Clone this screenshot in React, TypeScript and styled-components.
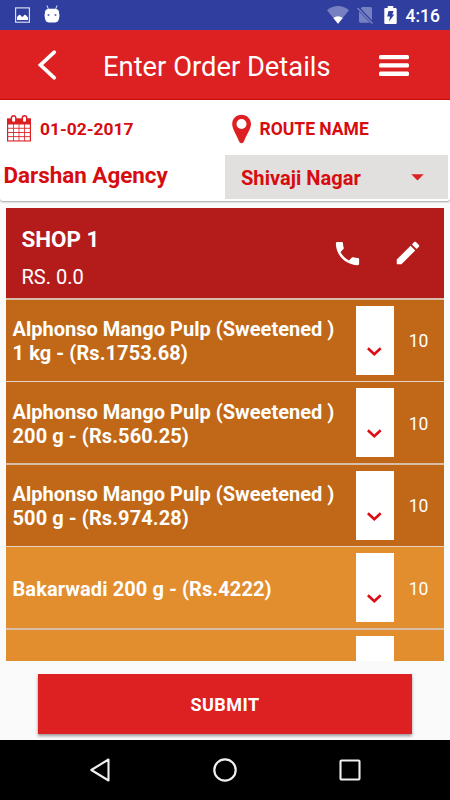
import React from "react";
import styled, { createGlobalStyle } from "styled-components";

const GlobalStyle = createGlobalStyle`
  * { box-sizing: border-box; }
  body { margin: 0; background: #fafafa; font-family: Roboto, "Liberation Sans", sans-serif; }
  svg { display: block; flex: none; }
  button { border: 0; padding: 0; background: none; font: inherit; color: inherit; }
`;

const Screen = styled.div`
  display: flex;
  flex-direction: column;
  width: 450px;
  height: 800px;
  overflow: hidden;
  background: #fafafa;
`;

const StatusBar = styled.div`
  display: flex;
  flex: none;
  align-items: center;
  height: 30px;
  padding: 0 10px 0 15px;
  background: #303f9f;
  color: #fff;
`;

const StatusGroup = styled.div<{ $gap: number }>`
  display: flex;
  align-items: center;
  gap: ${(p) => p.$gap}px;
`;

const BatterySlot = styled.div`
  margin-left: 3px;
`;

const RobotSlot = styled.div`
  padding-bottom: 3px;
`;

const Clock = styled.span`
  margin-left: 9px;
  padding-top: 1px;
  font-size: 17.5px;
  font-weight: 500;
  line-height: 30px;
`;

const Spacer = styled.div`
  flex: 1;
`;

const AppBar = styled.header`
  display: flex;
  flex: none;
  align-items: center;
  height: 70px;
  padding: 0 41px 0 37px;
  background: #dd2022;
  border-bottom: 1px solid #cf0c0c;
  color: #fff;
`;

const Title = styled.h1`
  flex: 1;
  margin: 4px 0 0 46px;
  font-size: 27.35px;
  font-weight: 400;
  line-height: 34px;
  white-space: nowrap;
`;

const InfoCard = styled.section`
  display: grid;
  flex: none;
  grid-template-columns: 225px 1fr;
  grid-template-rows: 55px 44px;
  height: 101px;
  background: #fff;
  border-radius: 0 0 3px 3px;
  box-shadow: 0 1px 2px rgba(0, 0, 0, 0.35);
  color: #d70c0f;
`;

const InfoCell = styled.div<{ $inset: number; $gap: number }>`
  display: flex;
  align-items: center;
  gap: ${(p) => p.$gap}px;
  padding: 2px 0 0 ${(p) => p.$inset}px;
  font-size: 17.5px;
  font-weight: 700;
  line-height: 22px;
`;

const DateText = styled.span`
  font-size: 17.4px;
`;

const Agency = styled.div`
  padding-left: 3.5px;
  font-size: 22.4px;
  font-weight: 700;
  line-height: 41px;
`;

const Picker = styled.button`
  display: flex;
  align-items: center;
  justify-content: space-between;
  width: 222.5px;
  height: 44px;
  padding: 1px 23.5px 0 16px;
  background: #e1e0df;
  font-size: 20.1px;
  font-weight: 700;
`;

const OrderList = styled.main`
  flex: none;
  height: 453px;
  margin: 7px 6px 0;
  overflow: hidden;
`;

const ShopHeader = styled.div`
  display: flex;
  align-items: center;
  height: 90px;
  padding: 0 21.5px 0 15.5px;
  background: #b41c1c;
  color: #fff;
`;

const ShopText = styled.div`
  flex: 1;
`;

const ShopName = styled.div`
  padding-top: 11px;
  font-size: 22.4px;
  font-weight: 700;
  line-height: 37px;
`;

const ShopTotal = styled.div`
  font-size: 20px;
  line-height: 38px;
`;

const ShopActions = styled.div`
  display: flex;
  gap: 30px;
`;

const ItemRow = styled.div<{ $light?: boolean; $rule: number }>`
  display: flex;
  box-sizing: content-box;
  height: 81px;
  border-top: ${(p) => p.$rule}px solid ${(p) => (p.$rule === 2 ? "#d8bda9" : "#e6d3c8")};
  background: ${(p) => (p.$light ? "#e28d2e" : "#c06818")};
  color: #fff;
`;

const ItemName = styled.div<{ $nudge: number }>`
  align-self: center;
  width: 350px;
  padding: ${(p) => p.$nudge}px 0 0 6.5px;
  font-size: 20px;
  font-weight: 700;
  line-height: 24px;
`;

const NameLine = styled.div<{ $tracking?: number }>`
  letter-spacing: ${(p) => p.$tracking ?? 0}px;
`;

const Quantity = styled.button`
  display: flex;
  justify-content: center;
  width: 38px;
  height: 69px;
  margin-top: 6px;
  padding: 40px 2px 0 0;
  background: #fff;
`;

const Stock = styled.div<{ $nudge: number }>`
  width: 49px;
  padding-top: ${(p) => p.$nudge / 2}px;
  text-align: center;
  font-size: 17.5px;
  font-weight: 400;
  line-height: 83px;
`;

const Footer = styled.footer`
  flex: 1;
  padding: 13px 38px 0;
`;

const Submit = styled.button`
  display: block;
  width: 374px;
  height: 60px;
  background: #dd2022;
  box-shadow: 0 2px 3px rgba(0, 0, 0, 0.4);
  color: #fff;
  font-size: 18px;
  font-weight: 700;
  letter-spacing: 0.45px;
  line-height: 62px;
`;

const NavBar = styled.nav`
  display: flex;
  flex: none;
  align-items: center;
  justify-content: space-between;
  height: 60px;
  padding: 0 88px;
  background: #000;
`;

const ImageIcon = () => (
  <svg width="15" height="16" viewBox="0 0 15 16">
    <rect x=".6" y=".9" width="13.8" height="14.3" fill="none" stroke="#e4e7f5" strokeWidth="1.1" />
    <path d="M2 13V10l2-2 1-.3 2 2.2 1.3-.7 1.2-1.4 1.2.2 2.3 2.5V13z" fill="#fff" />
  </svg>
);

const RobotIcon = () => (
  <svg width="16" height="18" viewBox="0 0 16 18">
    <path d="M3 .5 4.3 4M13 .5 11.7 4" stroke="#dfe3f5" strokeWidth="1" />
    <path d="M1.200 6C1.400 4.300 3.700 3.700 8 3.700s6.600.6 6.800 2.300l.7 4.700-.7 3.500c-.5 2.200-2 3.200-4 3.200H5.200c-2 0-3.500-1-4-3.200l-.7-3.500z" fill="#fff" />
    <circle cx="4.500" cy="10" r="1.050" fill="#5c69b5" />
    <circle cx="11.500" cy="10" r="1.050" fill="#5c69b5" />
  </svg>
);

const WifiIcon = () => (
  <svg width="22" height="18" viewBox="0 0 22 18">
    <path d="M0 4.200Q11-4.200 22 4.200L11 17.800z" fill="#7781c1" />
    <path d="M6.300 12Q11 8.700 15.700 12L11 17.800z" fill="#fff" />
  </svg>
);

const NoSimIcon = () => (
  <svg width="16" height="18" viewBox="0 0 16 18">
    <path d="M5 1h8.500Q15 1 15 2.500V14.200L3.800 2.400z" fill="#7781c1" />
    <path d="M2 5.200 13 16.700H3.500Q2 16.700 2 15z" fill="#7781c1" />
    <path d="M.5 2 15.500 17.500" stroke="#7781c1" strokeWidth="1.400" />
  </svg>
);

const BatteryIcon = () => (
  <svg width="13" height="18" viewBox="0 0 13 18">
    <path d="M3.700 0h5.600v2h2.300Q12.700 2 12.700 3v14q0 1-1 1H1.300q-1 0-1-1V3q0-1 1-1h2.400z" fill="#fff" />
    <path d="M4.500 5H9.600L8.300 8.500h2L5 15.500l1-5H3.200z" fill="#303f9f" />
  </svg>
);

const BackIcon = () => (
  <svg width="20" height="32" viewBox="0 0 20 32">
    <path d="M17.300 3.200 3.500 16l13.800 12.800" fill="none" stroke="#fff" strokeWidth="3.700" strokeLinecap="round" />
  </svg>
);

const MenuIcon = () => (
  <svg width="30" height="25" viewBox="0 0 30 25">
    <rect y="3" width="30" height="4.300" rx="1.500" fill="#fff" />
    <rect y="11.300" width="30" height="4.300" rx="1.500" fill="#fff" />
    <rect y="19.600" width="30" height="4.300" rx="1.500" fill="#fff" />
  </svg>
);

const CalendarIcon = () => (
  <svg width="25" height="27" viewBox="0 0 25 27">
    <path d="M0 3.300h24V26.500H0z" fill="#dd2022" />
    <g fill="#fff">
      {[9.500, 13.700, 17.900, 22.100].map((y) =>
        [1.200, 6.800, 12.400, 18].map((x) => (
          <rect key={`${x}-${y}`} x={x} y={y} width="4.800" height="3.300" />
        )),
      )}
    </g>
    {[6.600, 17.500].map((x) => (
      <g key={x}>
        <rect x={x - 2.900} y="0" width="5.800" height="7.600" rx="2.900" fill="#dd2022" />
        <rect x={x - 1.500} y="1.600" width="3" height="5.200" rx="1.500" fill="#fff" />
      </g>
    ))}
  </svg>
);

const PinIcon = () => (
  <svg width="20" height="30" viewBox="0 0 20 30">
    <path
      fillRule="evenodd"
      d="M9.500.7C4.200.7.200 4.700.200 10c0 4.700 3.700 9.600 6.500 16.600.6 1.600 1.300 2.600 2.800 2.600s2.200-1 2.800-2.600c2.800-7 6.700-11.900 6.700-16.600C19 4.700 14.800.7 9.500.7zM9.500 5a5 5 0 1 1 0 10 5 5 0 0 1 0-10z"
      fill="#dd2022"
    />
  </svg>
);

const CaretIcon = () => (
  <svg width="13" height="7" viewBox="0 0 13 7">
    <path d="M.3.200h12.400L6.500 6.600z" fill="#dd2022" />
  </svg>
);

const PhoneIcon = () => (
  <svg width="31" height="31" viewBox="0 0 24 24">
    <path
      d="M6.620 10.790c1.440 2.830 3.760 5.140 6.590 6.590l2.200-2.200c.27-.27.67-.36 1.020-.24 1.120.37 2.330.57 3.570.57.55 0 1 .45 1 1V20c0 .55-.45 1-1 1-9.390 0-17-7.610-17-17 0-.55.45-1 1-1h3.500c.55 0 1 .45 1 1 0 1.250.2 2.450.57 3.570.11.35.03.74-.25 1.020l-2.200 2.200z"
      fill="#fff"
    />
  </svg>
);

const EditIcon = () => (
  <svg width="30" height="30" viewBox="0 0 24 24">
    <path
      d="M3 17.250V21h3.750L17.810 9.940l-3.750-3.750L3 17.250zM20.710 7.040c.39-.39.39-1.020 0-1.410l-2.340-2.340c-.39-.39-1.020-.39-1.410 0l-1.830 1.830 3.750 3.750 1.830-1.830z"
      fill="#fff"
    />
  </svg>
);

const ChevronIcon = () => (
  <svg width="16" height="11" viewBox="0 0 16 11">
    <path d="m1.900 2.200 6.400 6 6.400-6" fill="none" stroke="#dd0c14" strokeWidth="2.600" />
  </svg>
);

const NavBack = () => (
  <svg width="24" height="26" viewBox="0 0 24 26">
    <path d="M20.500 2.500v21L3.300 13z" fill="none" stroke="#efefef" strokeWidth="2.100" strokeLinejoin="round" />
  </svg>
);

const NavHome = () => (
  <svg width="26" height="26" viewBox="0 0 26 26">
    <circle cx="13" cy="13" r="10.700" fill="none" stroke="#efefef" strokeWidth="2.200" />
  </svg>
);

const NavRecent = () => (
  <svg width="24" height="24" viewBox="0 0 24 24">
    <rect x="2.500" y="2.500" width="19" height="19" rx="1" fill="none" stroke="#efefef" strokeWidth="2.100" />
  </svg>
);

type Item = { name: string; price?: string; stock?: number; light?: boolean };

const items: Item[] = [
  { name: "Alphonso Mango Pulp (Sweetened )", price: "1 kg - (Rs.1753.68)", stock: 10 },
  { name: "Alphonso Mango Pulp (Sweetened )", price: "200 g - (Rs.560.25)", stock: 10 },
  { name: "Alphonso Mango Pulp (Sweetened )", price: "500 g - (Rs.974.28)", stock: 10 },
  { name: "", price: "Bakarwadi 200 g - (Rs.4222)", stock: 10, light: true },
  { name: "", light: true },
];

export default function App() {
  return (
    <>
      <GlobalStyle />
      <Screen>
        <StatusBar>
          <StatusGroup $gap={14}>
            <ImageIcon />
            <RobotSlot>
              <RobotIcon />
            </RobotSlot>
          </StatusGroup>
          <Spacer />
          <StatusGroup $gap={8}>
            <WifiIcon />
            <NoSimIcon />
            <BatterySlot>
              <BatteryIcon />
            </BatterySlot>
          </StatusGroup>
          <Clock>4:16</Clock>
        </StatusBar>
        <AppBar>
          <BackIcon />
          <Title>Enter Order Details</Title>
          <MenuIcon />
        </AppBar>
        <InfoCard>
          <InfoCell $inset={7} $gap={8}>
            <CalendarIcon />
            <DateText>01-02-2017</DateText>
          </InfoCell>
          <InfoCell $inset={6.5} $gap={8}>
            <PinIcon />
            <span>ROUTE NAME</span>
          </InfoCell>
          <Agency>Darshan Agency</Agency>
          <Picker>
            <span>Shivaji Nagar</span>
            <CaretIcon />
          </Picker>
        </InfoCard>
        <OrderList>
          <ShopHeader>
            <ShopText>
              <ShopName>SHOP 1</ShopName>
              <ShopTotal>RS. 0.0</ShopTotal>
            </ShopText>
            <ShopActions>
              <PhoneIcon />
              <EditIcon />
            </ShopActions>
          </ShopHeader>
          {items.map((item, i) => {
            const nudge = i % 2 ? 2 : 0;
            return (
              <ItemRow key={i} $light={item.light} $rule={i % 2 ? 1 : 2}>
                <ItemName $nudge={nudge}>
                  {item.name && <NameLine $tracking={0.015}>{item.name}</NameLine>}
                  {item.price && <NameLine $tracking={0.09}>{item.price}</NameLine>}
                </ItemName>
                <Quantity>
                  <ChevronIcon />
                </Quantity>
                <Stock $nudge={nudge}>{item.stock}</Stock>
              </ItemRow>
            );
          })}
        </OrderList>
        <Footer>
          <Submit>SUBMIT</Submit>
        </Footer>
        <NavBar>
          <NavBack />
          <NavHome />
          <NavRecent />
        </NavBar>
      </Screen>
    </>
  );
}
